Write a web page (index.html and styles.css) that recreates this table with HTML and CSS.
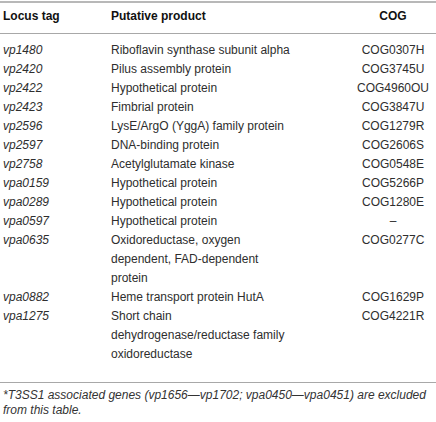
FILE: index.html
```html
<!DOCTYPE html>
<html>
<head>
<meta charset="utf-8">
<link rel="stylesheet" href="styles.css">
</head>
<body>
<div class="wrap">
<div class="rule-top"></div>
<table class="tbl">
<thead>
<tr><th class="c1">Locus tag</th><th class="c2">Putative product</th><th class="c3">COG</th></tr>
</thead>
<tbody>
<tr class="first"><td class="c1">vp1480</td><td class="c2">Riboflavin synthase subunit alpha</td><td class="c3">COG0307H</td></tr>
<tr><td class="c1">vp2420</td><td class="c2">Pilus assembly protein</td><td class="c3">COG3745U</td></tr>
<tr><td class="c1">vp2422</td><td class="c2">Hypothetical protein</td><td class="c3">COG4960OU</td></tr>
<tr><td class="c1">vp2423</td><td class="c2">Fimbrial protein</td><td class="c3">COG3847U</td></tr>
<tr><td class="c1">vp2596</td><td class="c2">LysE/ArgO (YggA) family protein</td><td class="c3">COG1279R</td></tr>
<tr><td class="c1">vp2597</td><td class="c2">DNA-binding protein</td><td class="c3">COG2606S</td></tr>
<tr><td class="c1">vp2758</td><td class="c2">Acetylglutamate kinase</td><td class="c3">COG0548E</td></tr>
<tr><td class="c1">vpa0159</td><td class="c2">Hypothetical protein</td><td class="c3">COG5266P</td></tr>
<tr><td class="c1">vpa0289</td><td class="c2">Hypothetical protein</td><td class="c3">COG1280E</td></tr>
<tr><td class="c1">vpa0597</td><td class="c2">Hypothetical protein</td><td class="c3">–</td></tr>
<tr><td class="c1">vpa0635</td><td class="c2">Oxidoreductase, oxygen<br>dependent, FAD-dependent<br>protein</td><td class="c3">COG0277C</td></tr>
<tr><td class="c1">vpa0882</td><td class="c2">Heme transport protein HutA</td><td class="c3">COG1629P</td></tr>
<tr class="last"><td class="c1">vpa1275</td><td class="c2">Short chain<br>dehydrogenase/reductase family<br>oxidoreductase</td><td class="c3">COG4221R</td></tr>
</tbody>
</table>
<p class="note">*T3SS1 associated genes (vp1656—vp1702; vpa0450—vpa0451) are excluded<br>from this table.</p>
</div>
</body>
</html>
```
FILE: styles.css
```css
html, body { margin: 0; padding: 0; background: #fff; }
body { font-family: "Liberation Sans", Arial, sans-serif; color: #2e2e2e; }
.wrap { width: 436px; padding-top: 1px; }
.rule-top { height: 2px; background: #b8b8b8; }
.tbl { width: 100%; border-collapse: collapse; }
.tbl th { font-weight: bold; font-size: 12px; line-height: 19px; color: #111; text-align: left; padding: 4px 0 7px 0; vertical-align: middle; border-bottom: 1px solid #a8a8a8; }
.tbl td { font-size: 12px; line-height: 19px; padding: 0; vertical-align: top; }
.c1 { width: 108px; padding-left: 3px !important; }
.c1 { font-style: italic; }
th.c1 { font-style: normal; }
.c2 { width: auto; }
.c3 { width: 86px; text-align: center; }
th.c3 { text-align: center; }
.tbl tr.first td { padding-top: 7px; }
.tbl tr.last td { padding-bottom: 18px; border-bottom: 1px solid #a8a8a8; }
.note { margin: 0; padding: 5px 0 0 3px; font-size: 12px; line-height: 15px; font-style: italic; color: #333; }
```
